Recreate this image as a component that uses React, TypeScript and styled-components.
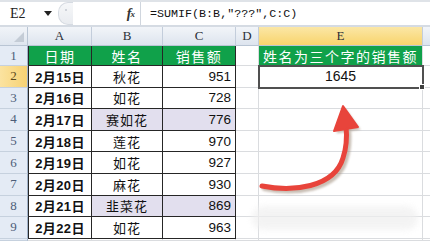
import React from 'react';
import styled, { createGlobalStyle, css } from 'styled-components';

const GlobalStyle = createGlobalStyle`
  html, body {
    margin: 0;
    padding: 0;
    background: #ffffff;
  }
  body {
    width: 430px;
    height: 241px;
    overflow: hidden;
    font-family: "Liberation Sans", "Noto Sans CJK SC", sans-serif;
  }
`;

const Window = styled.div`
  position: relative;
  width: 430px;
  height: 241px;
  overflow: hidden;
  background: #fff;
`;

// ---------- formula bar ----------
const FormulaBar = styled.div`
  display: flex;
  align-items: stretch;
  height: 23px;
  border-top: 2px solid #dfe3e8;
  border-bottom: 2px solid #d5dbe3;
  background: #fff;
`;

const NameBox = styled.div`
  width: 58px;
  display: flex;
  align-items: center;
  justify-content: space-between;
  padding: 0 6px 0 10px;
  box-sizing: border-box;
  font-family: "Liberation Serif", serif;
  font-size: 14px;
  color: #222;
`;

const DropArrow = styled.span`
  width: 0;
  height: 0;
  border-left: 4px solid transparent;
  border-right: 4px solid transparent;
  border-top: 5px solid #222;
`;

const Grip = styled.div`
  width: 14px;
  height: 21px;
  border-radius: 10px 0 0 10px;
  border: 1px solid #d6dbe2;
  border-right: none;
  background: linear-gradient(#f6f7f9, #e9ecf0);
  display: flex;
  align-items: center;
  justify-content: center;
  &::after {
    content: '';
    width: 2px;
    height: 2px;
    background: #c3c9d1;
    border-radius: 1px;
    margin-top: -8px;
  }
`;

const FxArea = styled.div`
  width: 68px;
  display: flex;
  align-items: center;
  justify-content: flex-end;
  padding-right: 6px;
  box-sizing: border-box;
  border-right: 1px solid #d0d6de;
  font-family: "Liberation Serif", serif;
  font-style: italic;
  font-weight: bold;
  font-size: 14px;
  color: #333;
  letter-spacing: -1px;
  sub {
    font-size: 9px;
    vertical-align: -1px;
  }
`;

const FormulaText = styled.div`
  flex: 1;
  display: flex;
  align-items: center;
  padding-left: 9px;
  font-family: "Liberation Mono", monospace;
  font-size: 11.7px;
  color: #111;
  white-space: pre;
`;

// ---------- sheet ----------
const Sheet = styled.div`
  display: grid;
  grid-template-columns: 28px 64px 71px 73px 23px 164px 1fr;
  grid-template-rows: 19px 20px repeat(8, 21.6px) 1fr;
  height: 214px;
`;

const Corner = styled.div`
  background: linear-gradient(#f1f4f8, #dfe6ef);
  border-right: 1px solid #b9c5d4;
  border-bottom: 1px solid #b9c5d4;
  position: relative;
  &::after {
    content: '';
    position: absolute;
    right: 3px;
    bottom: 3px;
    width: 0;
    height: 0;
    border-left: 10px solid transparent;
    border-bottom: 10px solid #c4ccd6;
  }
`;

const ColHead = styled.div<{ $active?: boolean }>`
  display: flex;
  align-items: center;
  justify-content: center;
  font-family: "Liberation Serif", serif;
  font-size: 13px;
  color: #2a2f38;
  border-right: 1px solid #c3cddb;
  border-bottom: 1px solid #b9c5d4;
  background: ${(p) =>
    p.$active
      ? 'linear-gradient(#fbe7a6, #f8d46c)'
      : 'linear-gradient(#f2f5f9, #dde4ee)'};
`;

const RowHead = styled.div<{ $active?: boolean }>`
  display: flex;
  align-items: center;
  justify-content: center;
  font-family: "Liberation Serif", serif;
  font-size: 13px;
  color: ${(p) => (p.$active ? '#5b4a1c' : '#4d5d78')};
  border-right: 1px solid #9fb1c8;
  border-bottom: 1px solid #c6d1de;
  background: ${(p) =>
    p.$active ? 'linear-gradient(90deg, #fbe3a0, #f7d273)' : '#e4ebf5'};
`;

type CellProps = {
  $align?: 'left' | 'center' | 'right';
  $bg?: string;
  $table?: boolean;
  $first?: boolean;
  $kind?: 'date' | 'name' | 'num' | 'head';
};

const Cell = styled.div<CellProps>`
  display: flex;
  align-items: center;
  justify-content: ${(p) =>
    p.$align === 'left' ? 'flex-start' : p.$align === 'right' ? 'flex-end' : 'center'};
  padding: 0 4px;
  box-sizing: border-box;
  background: ${(p) => p.$bg || '#fff'};
  border-right: 1px solid ${(p) => (p.$table ? '#262626' : '#dadcdf')};
  border-bottom: 1px solid ${(p) => (p.$table ? '#262626' : '#dadcdf')};
  ${(p) => p.$first && css`border-left: 1px solid #262626;`}
  white-space: nowrap;
  color: #111;
  ${(p) =>
    p.$kind === 'date' &&
    css`
      font-family: "Liberation Sans", "Noto Sans CJK SC", sans-serif;
      font-weight: bold;
      font-size: 13px;
      letter-spacing: 0.4px;
    `}
  ${(p) =>
    p.$kind === 'name' &&
    css`
      font-family: "Noto Sans CJK SC", sans-serif;
      font-size: 13px;
      letter-spacing: 1px;
    `}
  ${(p) =>
    p.$kind === 'num' &&
    css`
      font-family: "Liberation Sans", sans-serif;
      font-size: 13.5px;
    `}
  ${(p) =>
    p.$kind === 'head' &&
    css`
      font-family: "Noto Sans CJK SC", sans-serif;
      font-size: 14px;
      letter-spacing: 1.5px;
      color: #fff;
    `}
`;

const Selected = styled(Cell)`
  position: relative;
  z-index: 2;
  outline: 2px solid #505050;
  outline-offset: -1px;
  font-family: "Liberation Sans", sans-serif;
  font-size: 14px;
  &::after {
    content: '';
    position: absolute;
    right: -3px;
    bottom: -3px;
    width: 4px;
    height: 4px;
    background: #404040;
    border: 1px solid #fff;
  }
`;

const Overlay = styled.svg`
  position: absolute;
  left: 0;
  top: 0;
  pointer-events: none;
  z-index: 3;
`;

const Watermark = styled.div`
  position: absolute;
  left: 252px;
  top: 206px;
  width: 166px;
  height: 24px;
  border-radius: 12px;
  background: #efefef;
  filter: blur(3px);
  opacity: 0.7;
  z-index: 3;
`;

const GREEN = '#10a14a';
const HL = '#e2dfee';

const rows: { date: string; name: string; amount: string; hl?: boolean }[] = [
  { date: '2月15日', name: '秋花', amount: '951' },
  { date: '2月16日', name: '如花', amount: '728' },
  { date: '2月17日', name: '赛如花', amount: '776', hl: true },
  { date: '2月18日', name: '莲花', amount: '970' },
  { date: '2月19日', name: '如花', amount: '927' },
  { date: '2月20日', name: '麻花', amount: '930' },
  { date: '2月21日', name: '韭菜花', amount: '869', hl: true },
  { date: '2月22日', name: '如花', amount: '963' },
];

export default function App() {
  return (
    <Window>
      <GlobalStyle />
      <FormulaBar>
        <NameBox>
          E2
          <DropArrow />
        </NameBox>
        <Grip />
        <FxArea>
          f<sub>x</sub>
        </FxArea>
        <FormulaText>=SUMIF(B:B,"???",C:C)</FormulaText>
      </FormulaBar>

      <Sheet>
        <Corner />
        <ColHead>A</ColHead>
        <ColHead>B</ColHead>
        <ColHead>C</ColHead>
        <ColHead>D</ColHead>
        <ColHead $active>E</ColHead>
        <ColHead />

        <RowHead>1</RowHead>
        <Cell $table $first $bg={GREEN} $kind="head">日期</Cell>
        <Cell $table $bg={GREEN} $kind="head">姓名</Cell>
        <Cell $table $bg={GREEN} $kind="head">销售额</Cell>
        <Cell />
        <Cell $bg={GREEN} $kind="head">姓名为三个字的销售额</Cell>
        <Cell />

        {rows.map((r, i) => (
          <React.Fragment key={r.date}>
            <RowHead $active={i === 0}>{i + 2}</RowHead>
            <Cell $table $first $kind="date">{r.date}</Cell>
            <Cell $table $kind="name" $bg={r.hl ? HL : undefined}>{r.name}</Cell>
            <Cell $table $kind="num" $align="right" $bg={r.hl ? HL : undefined}>{r.amount}</Cell>
            <Cell />
            {i === 0 ? <Selected>1645</Selected> : <Cell />}
            <Cell />
          </React.Fragment>
        ))}

        <RowHead />
        <Cell />
        <Cell />
        <Cell />
        <Cell />
        <Cell />
        <Cell />
      </Sheet>

      <Watermark />

      <Overlay width="430" height="241" viewBox="0 0 430 241">
        <defs>
          <filter id="sh" x="-20%" y="-20%" width="140%" height="140%">
            <feGaussianBlur stdDeviation="1.2" />
          </filter>
        </defs>
        <g transform="translate(2.5 2.5)" opacity="0.55" filter="url(#sh)">
          <path
            d="M262 186 C292 192 334 188 343 158 C347 146 347 136 346 126"
            fill="none"
            stroke="#9c8a78"
            strokeWidth="5"
            strokeLinecap="round"
          />
          <polygon points="334,131 358,127 343,106" fill="#9c8a78" />
        </g>
        <path
          d="M262 186 C292 192 334 188 343 158 C347 146 347 136 346 126"
          fill="none"
          stroke="#e8443b"
          strokeWidth="5"
          strokeLinecap="round"
        />
        <polygon
          points="334,131 358,127 343,106"
          fill="#e8443b"
          stroke="#e8443b"
          strokeWidth="2"
          strokeLinejoin="round"
        />
      </Overlay>
    </Window>
  );
}
